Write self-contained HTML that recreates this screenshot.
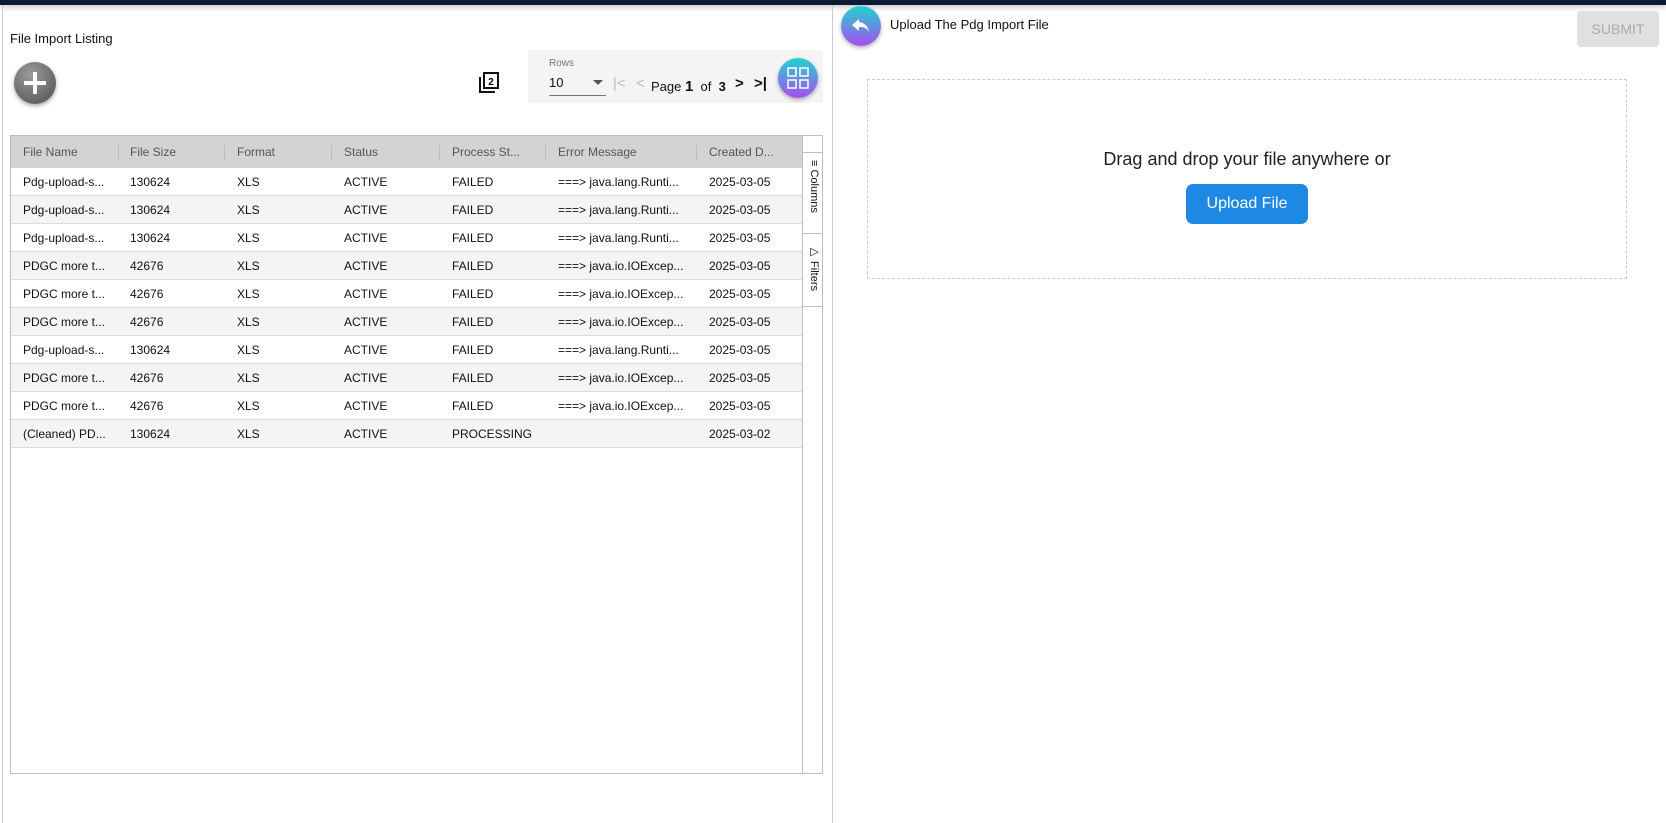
<!DOCTYPE html>
<html><head><meta charset="utf-8"><style>
*{box-sizing:border-box;margin:0;padding:0}
body{width:1666px;height:823px;overflow:hidden;background:#fff;font-family:"Liberation Sans",sans-serif;position:relative;color:#222}
.abs{position:absolute}
.topbar{left:0;top:0;width:1666px;height:5px;background:#0b1b33;box-shadow:0 2px 6px rgba(0,0,0,.25)}
.tbl{left:10px;top:135px;width:793px;height:639px;border:1px solid #bdbdbd}
.hdr{position:absolute;left:0;top:0;width:791px;height:33px;background:#d3d3d3;border-bottom:1px solid #bdbdbd}
.row{position:absolute;left:0;width:791px;height:28px;border-bottom:1px solid #dcdcdc;font-size:12px;color:#111}
.c{position:absolute;top:0;line-height:28px;white-space:nowrap}
.h{position:absolute;top:0;line-height:33px;font-size:12px;color:#555}
.sep{position:absolute;top:9px;width:1px;height:15px;background:#bbb}
</style></head><body>
<div class="abs topbar"></div>
<div class="abs" style="left:2px;top:5px;width:1px;height:818px;background:#ccc"></div>
<div class="abs" style="left:832px;top:5px;width:1px;height:818px;background:#ccc"></div>

<div class="abs" style="left:10px;top:31px;font-size:13px;color:#111">File Import Listing</div>
<div class="abs" style="left:14px;top:62px;width:42px;height:42px;border-radius:50%;background:radial-gradient(circle at 40% 30%,#9a9a9a,#4e4e4e);box-shadow:0 2px 4px rgba(0,0,0,.35)"></div>
<div class="abs" style="left:33px;top:72px;width:4px;height:22px;background:#fff"></div>
<div class="abs" style="left:24px;top:81px;width:22px;height:4px;background:#fff"></div>

<svg class="abs" style="left:478px;top:72px" width="22" height="22" viewBox="0 0 22 22"><path d="M2 5v15h15" fill="none" stroke="#111" stroke-width="2"/><rect x="6" y="1" width="14" height="15" fill="none" stroke="#111" stroke-width="2"/><text x="13" y="13" font-size="10" font-weight="bold" text-anchor="middle" font-family="Liberation Sans">2</text></svg>

<div class="abs" style="left:528px;top:50px;width:295px;height:53px;background:#f4f4f4"></div>
<div class="abs" style="left:549px;top:58px;font-size:10px;color:#777">Rows</div>
<div class="abs" style="left:549px;top:75px;font-size:13px;color:#111">10</div>
<div class="abs" style="left:593px;top:80px;width:0;height:0;border-left:5px solid transparent;border-right:5px solid transparent;border-top:5px solid #555"></div>
<div class="abs" style="left:549px;top:95px;width:57px;height:1px;background:#777"></div>
<div class="abs" style="left:613px;top:75px;font-size:15px;color:#bbb">|&lt;</div>
<div class="abs" style="left:636px;top:75px;font-size:15px;color:#bbb">&lt;</div>
<div class="abs" style="left:651px;top:78px;font-size:13px;color:#111">Page <b style="font-size:15px">1</b>&nbsp; of &nbsp;<b>3</b></div>
<div class="abs" style="left:735px;top:75px;font-size:15px;color:#111;font-weight:bold">&gt;</div>
<div class="abs" style="left:754px;top:75px;font-size:15px;color:#111;font-weight:bold">&gt;|</div>
<div class="abs" style="left:778px;top:58px;width:40px;height:40px;border-radius:50%;background:linear-gradient(#1fd4d0,#a84df0);box-shadow:0 2px 4px rgba(0,0,0,.3)"></div>
<svg class="abs" style="left:787px;top:67px" width="22" height="22"><g fill="none" stroke="#fff" stroke-width="1.5"><rect x="1" y="1" width="8" height="8"/><rect x="13" y="1" width="8" height="8"/><rect x="1" y="13" width="8" height="8"/><rect x="13" y="13" width="8" height="8"/></g></svg>

<div class="abs tbl">
<div class="hdr">
<div class="h" style="left:12px">File Name</div><div class="sep" style="left:107px"></div>
<div class="h" style="left:119px">File Size</div><div class="sep" style="left:213px"></div>
<div class="h" style="left:226px">Format</div><div class="sep" style="left:320px"></div>
<div class="h" style="left:333px">Status</div><div class="sep" style="left:428px"></div>
<div class="h" style="left:441px">Process St...</div><div class="sep" style="left:534px"></div>
<div class="h" style="left:547px">Error Message</div><div class="sep" style="left:685px"></div>
<div class="h" style="left:698px">Created D...</div>
</div>
<div class="abs" style="left:791px;top:0;width:1px;height:637px;background:#bdbdbd"></div>
</div>
<div class="abs" style="left:802px;top:135px;width:21px;height:639px;border:1px solid #bdbdbd;border-left:none"></div>
<div class="abs" style="left:802px;top:152px;width:21px;height:1px;background:#bdbdbd"></div>
<div class="abs" style="left:802px;top:233px;width:21px;height:1px;background:#bdbdbd"></div>
<div class="abs" style="left:802px;top:306px;width:21px;height:1px;background:#bdbdbd"></div>
<div class="abs" style="left:808px;top:160px;font-size:11px;line-height:11px;writing-mode:vertical-rl;color:#111">&#8801; Columns</div>
<div class="abs" style="left:808px;top:245px;font-size:11px;line-height:11px;writing-mode:vertical-rl;color:#111">&#9655; Filters</div>

<div class="abs" style="left:11px;top:168px">
<div class="row" style="top:0;background:#fff"><span class="c" style="left:12px">Pdg-upload-s...</span><span class="c" style="left:119px">130624</span><span class="c" style="left:226px">XLS</span><span class="c" style="left:333px">ACTIVE</span><span class="c" style="left:441px">FAILED</span><span class="c" style="left:547px">===&gt; java.lang.Runti...</span><span class="c" style="left:698px">2025-03-05</span></div>
<div class="row" style="top:28px;background:#f4f4f4"><span class="c" style="left:12px">Pdg-upload-s...</span><span class="c" style="left:119px">130624</span><span class="c" style="left:226px">XLS</span><span class="c" style="left:333px">ACTIVE</span><span class="c" style="left:441px">FAILED</span><span class="c" style="left:547px">===&gt; java.lang.Runti...</span><span class="c" style="left:698px">2025-03-05</span></div>
<div class="row" style="top:56px;background:#fff"><span class="c" style="left:12px">Pdg-upload-s...</span><span class="c" style="left:119px">130624</span><span class="c" style="left:226px">XLS</span><span class="c" style="left:333px">ACTIVE</span><span class="c" style="left:441px">FAILED</span><span class="c" style="left:547px">===&gt; java.lang.Runti...</span><span class="c" style="left:698px">2025-03-05</span></div>
<div class="row" style="top:84px;background:#f4f4f4"><span class="c" style="left:12px">PDGC more t...</span><span class="c" style="left:119px">42676</span><span class="c" style="left:226px">XLS</span><span class="c" style="left:333px">ACTIVE</span><span class="c" style="left:441px">FAILED</span><span class="c" style="left:547px">===&gt; java.io.IOExcep...</span><span class="c" style="left:698px">2025-03-05</span></div>
<div class="row" style="top:112px;background:#fff"><span class="c" style="left:12px">PDGC more t...</span><span class="c" style="left:119px">42676</span><span class="c" style="left:226px">XLS</span><span class="c" style="left:333px">ACTIVE</span><span class="c" style="left:441px">FAILED</span><span class="c" style="left:547px">===&gt; java.io.IOExcep...</span><span class="c" style="left:698px">2025-03-05</span></div>
<div class="row" style="top:140px;background:#f4f4f4"><span class="c" style="left:12px">PDGC more t...</span><span class="c" style="left:119px">42676</span><span class="c" style="left:226px">XLS</span><span class="c" style="left:333px">ACTIVE</span><span class="c" style="left:441px">FAILED</span><span class="c" style="left:547px">===&gt; java.io.IOExcep...</span><span class="c" style="left:698px">2025-03-05</span></div>
<div class="row" style="top:168px;background:#fff"><span class="c" style="left:12px">Pdg-upload-s...</span><span class="c" style="left:119px">130624</span><span class="c" style="left:226px">XLS</span><span class="c" style="left:333px">ACTIVE</span><span class="c" style="left:441px">FAILED</span><span class="c" style="left:547px">===&gt; java.lang.Runti...</span><span class="c" style="left:698px">2025-03-05</span></div>
<div class="row" style="top:196px;background:#f4f4f4"><span class="c" style="left:12px">PDGC more t...</span><span class="c" style="left:119px">42676</span><span class="c" style="left:226px">XLS</span><span class="c" style="left:333px">ACTIVE</span><span class="c" style="left:441px">FAILED</span><span class="c" style="left:547px">===&gt; java.io.IOExcep...</span><span class="c" style="left:698px">2025-03-05</span></div>
<div class="row" style="top:224px;background:#fff"><span class="c" style="left:12px">PDGC more t...</span><span class="c" style="left:119px">42676</span><span class="c" style="left:226px">XLS</span><span class="c" style="left:333px">ACTIVE</span><span class="c" style="left:441px">FAILED</span><span class="c" style="left:547px">===&gt; java.io.IOExcep...</span><span class="c" style="left:698px">2025-03-05</span></div>
<div class="row" style="top:252px;background:#f4f4f4"><span class="c" style="left:12px">(Cleaned) PD...</span><span class="c" style="left:119px">130624</span><span class="c" style="left:226px">XLS</span><span class="c" style="left:333px">ACTIVE</span><span class="c" style="left:441px">PROCESSING</span><span class="c" style="left:698px">2025-03-02</span></div>
</div>

<div class="abs" style="left:841px;top:6px;width:40px;height:40px;border-radius:50%;background:linear-gradient(#1fd4d0,#a84df0);box-shadow:0 2px 4px rgba(0,0,0,.3)"></div>
<svg class="abs" style="left:849px;top:14px" width="24" height="24" viewBox="0 0 24 24"><path d="M10 5L3 11l7 6v-4c5 0 8 1 10 5-1-6-4-9-10-10z" fill="#fff"/></svg>
<div class="abs" style="left:890px;top:17px;font-size:13px;color:#111">Upload The Pdg Import File</div>
<div class="abs" style="left:1577px;top:11px;width:82px;height:36px;background:#e0e0e0;border-radius:4px;color:#aaa;font-size:14px;line-height:36px;text-align:center">SUBMIT</div>

<div class="abs" style="left:867px;top:79px;width:760px;height:200px;border:1px dashed #ccc"></div>
<div class="abs" style="left:867px;top:149px;width:760px;text-align:center;font-size:18px;color:#222">Drag and drop your file anywhere or</div>
<div class="abs" style="left:1186px;top:184px;width:122px;height:40px;background:#1e88e5;border-radius:7px;color:#fff;font-size:16px;line-height:40px;text-align:center">Upload File</div>
</body></html>
